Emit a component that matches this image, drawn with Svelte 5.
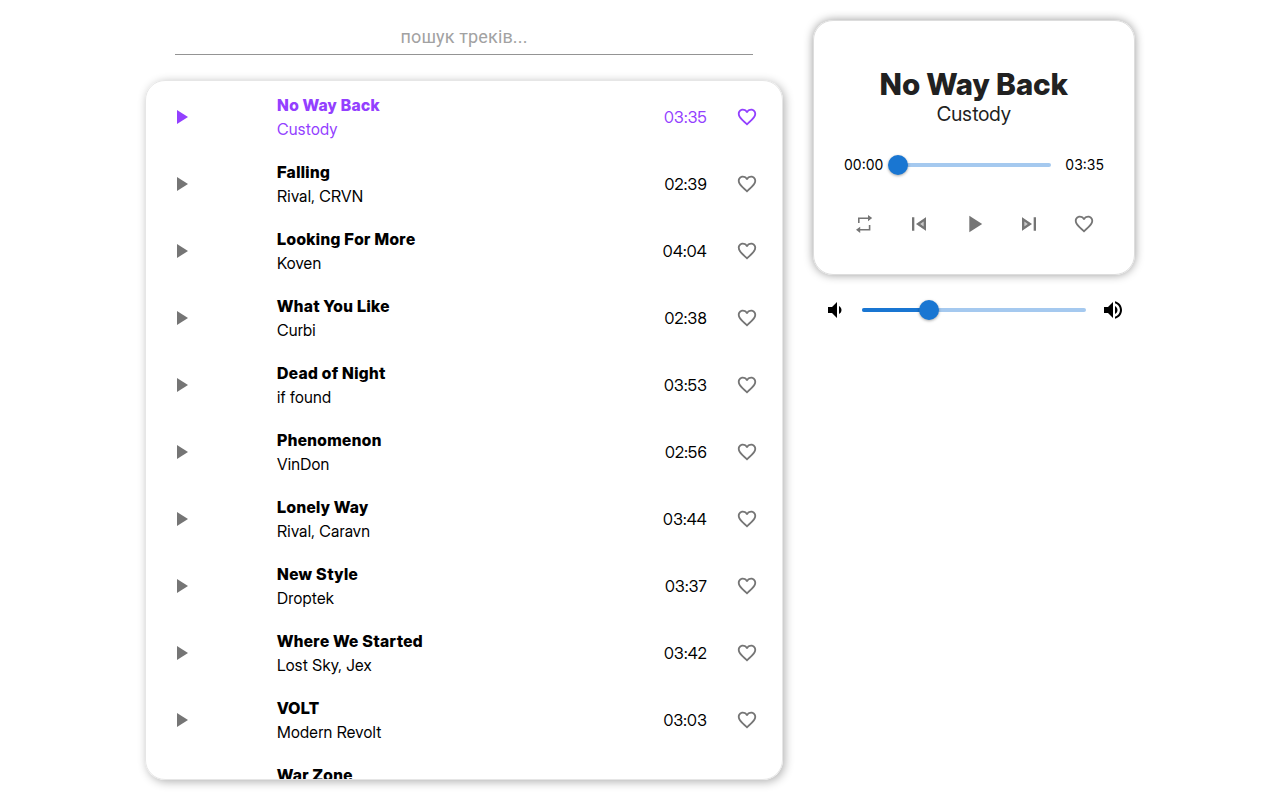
<script>
  const tracks = [
    ['No Way Back', 'Custody', '03:35'],
    ['Falling', 'Rival, CRVN', '02:39'],
    ['Looking For More', 'Koven', '04:04'],
    ['What You Like', 'Curbi', '02:38'],
    ['Dead of Night', 'if found', '03:53'],
    ['Phenomenon', 'VinDon', '02:56'],
    ['Lonely Way', 'Rival, Caravn', '03:44'],
    ['New Style', 'Droptek', '03:37'],
    ['Where We Started', 'Lost Sky, Jex', '03:42'],
    ['VOLT', 'Modern Revolt', '03:03'],
    ['War Zone', '', ''],
  ];
  let active = $state(0);
</script>

{#snippet heart()}
  <svg class="heart" viewBox="0 0 24 24"><path d="M16.5 3c-1.74 0-3.41.81-4.5 2.09C10.91 3.81 9.24 3 7.5 3 4.42 3 2 5.42 2 8.5c0 3.78 3.4 6.86 8.55 11.54L12 21.35l1.45-1.32C18.6 15.36 22 12.28 22 8.5 22 5.42 19.58 3 16.5 3zm-4.4 15.55l-.1.1-.1-.1C7.14 14.24 4 11.39 4 8.5 4 6.5 5.5 5 7.5 5c1.54 0 3.04.99 3.57 2.36h1.87C13.46 5.99 14.96 5 16.5 5c2 0 3.5 1.5 3.5 3.5 0 2.89-3.14 5.74-7.9 10.05z" /></svg>
{/snippet}

<div class="page">
  <main>
    <input class="search" placeholder="пошук треків..." />
    <div class="list">
      {#each tracks as [title, artist, time], i}
        <div class="track" class:active={i === active}>
          <button class="play" onclick={() => (active = i)} aria-label="play">
            <svg viewBox="0 0 24 24"><path d="M8 5v14l11-7z" /></svg>
          </button>
          <div class="info"><b>{title}</b><span>{artist}</span></div>
          {#if time}
            <span class="time">{time}</span>
            <button class="like" aria-label="like">{@render heart()}</button>
          {/if}
        </div>
      {/each}
    </div>
  </main>
  <aside>
    <section class="player">
      <h1>{tracks[active][0]}</h1>
      <p>{tracks[active][1]}</p>
      <div class="progress">
        <span>00:00</span>
        <div class="slider"><i class="thumb" style="left: 0%"></i></div>
        <span>{tracks[active][2]}</span>
      </div>
      <div class="controls">
        <svg viewBox="0 0 28 28"><path d="M8 13V7.400h10V5l4.200 3.100L18 11.200V8.900H9.600V13zM20.400 15v5.600H10.200v2.300L6 19.800l4.200-3.100v2.400h8.600V15z" /></svg>
        <svg viewBox="0 0 24 24"><path d="M6 6.200h2v11.600H6zm3.500 5.800l8.500 5.700V6.300zm6.500 2.140L12.970 12 16 9.860z" /><path opacity=".4" d="M9.500 12l8.500 5.700V6.300z" /></svg>
        <svg viewBox="0 0 24 24"><path d="M8 5v14l11-7z" /></svg>
        <svg viewBox="0 0 24 24"><path d="M6 17.700l8.500-5.700L6 6.300zm2-7.840L11.030 12 8 14.140zM16 6.200h2v11.600h-2z" /><path opacity=".4" d="M6 17.700l8.500-5.700L6 6.300z" /></svg>
        {@render heart()}
      </div>
    </section>
    <div class="volume">
      <svg viewBox="0 0 24 24"><path d="M18.500 12c0-1.770-1.020-3.290-2.500-4.030v8.050c1.480-.730 2.500-2.250 2.500-4.020zM5 9v6h4l5 5V4L9 9H5z" /></svg>
      <div class="slider"><i class="fill" style="width: 30%"></i><i class="thumb" style="left: 30%"></i></div>
      <svg viewBox="0 0 24 24"><path d="M3 9v6h4l5 5V4L7 9H3zm13.500 3c0-1.770-1.020-3.290-2.500-4.030v8.050c1.480-.730 2.500-2.250 2.500-4.020zM14 3.230v2.060c2.890.860 5 3.540 5 6.710s-2.110 5.850-5 6.710v2.060c4.010-.910 7-4.490 7-8.770s-2.990-7.860-7-8.770z" /></svg>
    </div>
  </aside>
</div>

<style>
  :global(body) { background: #fff; overflow: hidden; }
  .page { display: flex; gap: 30px; width: 990px; height: 800px; box-sizing: border-box; padding: 20px 0; margin-left: 145px; font-family: "Inter Display", Inter, sans-serif; font-size: 16px; line-height: 24px; letter-spacing: .25px; color: #000; }
  main { width: 638px; }
  .search { display: block; box-sizing: border-box; width: 578px; height: 35px; margin: 0 30px 25px; padding: 0 0 2px; border: 0; border-bottom: 1px solid #949494; text-align: center; font: 18px Roboto, sans-serif; letter-spacing: .15px; outline: 0; background: none; }
  .search::placeholder { color: #a2a2a2; opacity: 1; }
  .list { box-sizing: border-box; width: 638px; height: 700px; overflow: hidden; border: 1px solid #e6e6e6; border-radius: 20px; box-shadow: 2px 2px 10px rgba(0, 0, 0, .3); padding-top: 2px; }
  .track { display: flex; align-items: center; height: 67px; color: #000; }
  b { font-weight: 800; letter-spacing: .43px; }
  button { display: flex; border: 0; padding: 0; background: none; color: #757575; }
  svg { display: block; width: 24px; height: 24px; fill: currentColor; }
  .heart { width: 22px; height: 22px; }
  .play { margin-left: 23px; width: 108px; }
  .info { flex: 1; display: flex; flex-direction: column; }
  .info span { min-height: 24px; }
  .like { margin: 0 24px 0 29px; }
  .active, .active button { color: #9340ff; }
  aside { width: 322px; }
  .player { box-sizing: border-box; height: 255px; border: 1px solid #ddd; border-radius: 20px; box-shadow: 0 0 10px rgba(0, 0, 0, .4); padding: 44px 30px 0; text-align: center; color: #212121; }
  h1 { margin: 0; font-size: 30px; line-height: 38px; font-weight: 800; letter-spacing: .35px; }
  p { margin: 0; font-size: 20px; line-height: 22px; letter-spacing: .1px; }
  .progress { display: flex; align-items: center; justify-content: space-between; margin-top: 28px; font: 14px/24px Inter, sans-serif; letter-spacing: 0; color: #000; }
  .slider { position: relative; width: 153px; height: 4px; border-radius: 2px; background: #a5c9ef; }
  .thumb { position: absolute; top: 50%; width: 20px; height: 20px; border-radius: 50%; background: #1976d2; transform: translate(-50%, -50%); box-shadow: 0 1px 3px rgba(0, 0, 0, .35); }
  .fill { display: block; height: 100%; border-radius: 2px; background: #1976d2; }
  .controls { display: flex; align-items: center; justify-content: space-between; margin: 33px 6px 0; color: #757575; }
  .controls svg { width: 28px; height: 28px; }
  .controls .heart { width: 22px; height: 22px; margin: 0 3px; }
  .volume { display: flex; align-items: center; justify-content: space-between; margin-top: 23px; padding: 0 10px; }
  .volume .slider { width: 224px; }
</style>
